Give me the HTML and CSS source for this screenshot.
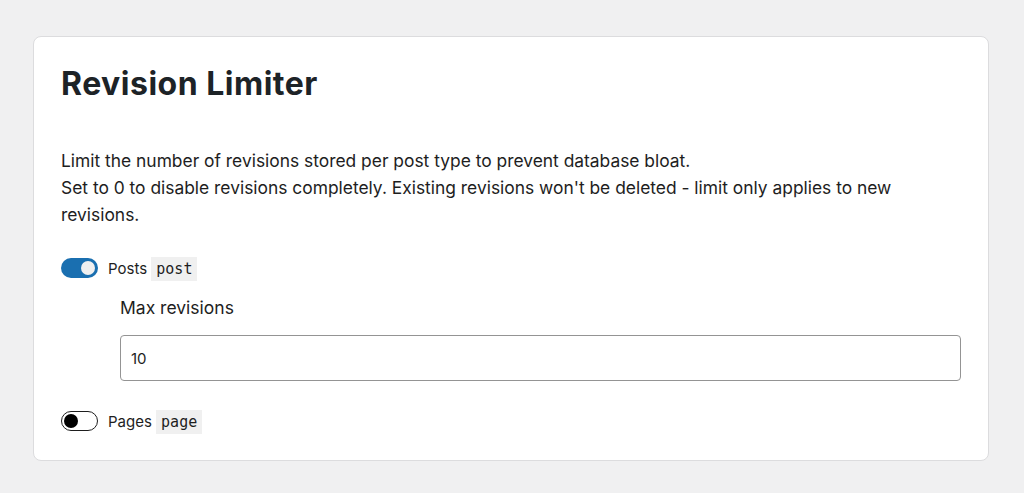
FILE: index.html
```html
<!DOCTYPE html>
<html>
<head>
<meta charset="utf-8">
<link rel="stylesheet" href="styles.css">
</head>
<body>
<div class="card">
  <h1 class="title">Revision Limiter</h1>
  <p class="desc">Limit the number of revisions stored per post type to prevent database bloat.<br>Set to 0 to disable revisions completely. Existing revisions won't be deleted - limit only applies to new revisions.</p>
  <div class="row">
    <span class="toggle on"><span class="knob"></span></span>
    <span class="label">Posts <code>post</code></span>
  </div>
  <div class="sub">
    <div class="field-label">Max revisions</div>
    <div class="input">10</div>
  </div>
  <div class="row">
    <span class="toggle off"><span class="knob"></span></span>
    <span class="label">Pages <code>page</code></span>
  </div>
</div>
</body>
</html>
```
FILE: styles.css
```css
html, body { margin: 0; padding: 0; }
body {
  background: #f0f0f1;
  font-family: Inter, "Liberation Sans", Arial, sans-serif;
  color: #1e1e1e;
  padding: 36px 35px 33px 33px;
}
.card {
  background: #fff;
  border: 1px solid #dcdcde;
  border-radius: 8px;
  padding: 26px 27px 26px 27px;
}
.title {
  margin: 0;
  font-size: 32px;
  font-weight: 700;
  letter-spacing: 0.5px;
  line-height: 42px;
  color: #1d2327;
}
.desc {
  margin: 42px 0 0 0;
  font-size: 17.4px;
  line-height: 27px;
}
.row {
  display: flex;
  align-items: center;
  gap: 10px;
  margin-top: 27px;
  height: 26px;
}
.toggle {
  box-sizing: border-box;
  width: 37px;
  height: 20px;
  border-radius: 10px;
  display: flex;
  align-items: center;
  padding: 0 3px;
}
.toggle.on { justify-content: flex-end; background: #1a6fb0; }
.toggle.off { border: 1.5px solid #1e1e1e; padding: 0 1.5px; }
.knob { border-radius: 50%; }
.toggle.on .knob { background: #f0f0f0; width: 14px; height: 14px; }
.toggle.off .knob { background: #000; width: 14px; height: 14px; }
.label { font-size: 15px; }
code {
  font-family: "DejaVu Sans Mono", monospace;
  font-size: 15px;
  background: #f0f0f0;
  padding: 3px 5px;
}
.sub { padding-left: 59px; margin-top: 14px; }
.field-label { font-size: 17.5px; line-height: 26px; }
.input {
  margin-top: 14px;
  box-sizing: border-box;
  height: 46px;
  border: 1px solid #949494;
  border-radius: 4px;
  font-size: 15px;
  padding: 0 10px;
  display: flex;
  align-items: center;
}
.row + .sub + .row { margin-top: 27px; }
```
